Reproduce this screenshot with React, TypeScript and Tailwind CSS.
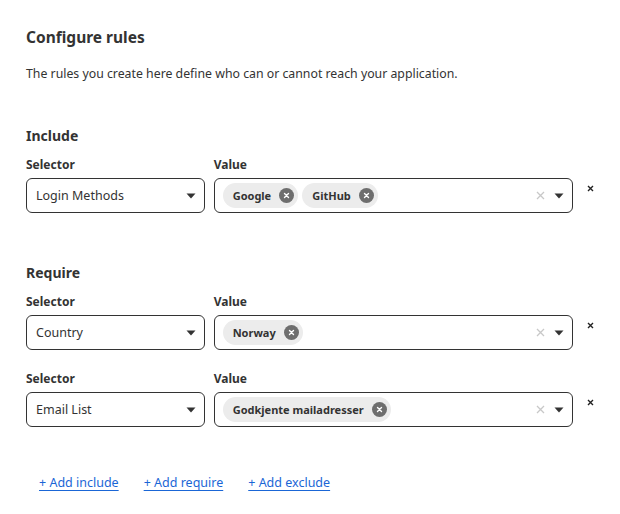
import React from 'react'

const font = { fontFamily: '"Noto Sans", "Open Sans", sans-serif' }

const Caret = () => (
  <svg width="10" height="6" viewBox="0 0 10 6" className="shrink-0">
    <path d="M0.5 0.5 L9.5 0.5 L5 5.5 Z" fill="#333" />
  </svg>
)

const Chip = ({ label }: { label: string }) => (
  <div className="flex items-center gap-[8px] h-[25px] rounded-full bg-[#ececec] pl-[10px] pr-[4px]">
    <span className="text-[11px] font-bold text-[#333]">{label}</span>
    <span className="flex items-center justify-center w-[15px] h-[15px] rounded-full bg-[#6e6e6e]">
      <svg width="7" height="7" viewBox="0 0 7 7">
        <path d="M1.5 1.5 L5.5 5.5 M5.5 1.5 L1.5 5.5" stroke="#fff" strokeWidth="1.4" strokeLinecap="round" />
      </svg>
    </span>
  </div>
)

type Rule = { selector: string; values: string[] }

const RuleRow = ({ rule }: { rule: Rule }) => (
  <div className="flex items-start">
    <div className="flex flex-col w-[179px]">
      <span className="text-[12px] font-bold text-[#333] leading-[18px] mb-[4px]">Selector</span>
      <div className="flex items-center justify-between h-[35px] border border-[#333] rounded-[6px] pl-[9px] pr-[8px]">
        <span className="text-[12.5px] text-[#333]">{rule.selector}</span>
        <Caret />
      </div>
    </div>
    <div className="flex flex-col w-[360px] ml-[9px]">
      <span className="text-[12px] font-bold text-[#333] leading-[18px] mb-[4px]">Value</span>
      <div className="flex items-center justify-between h-[35px] border border-[#333] rounded-[6px] pl-[8px] pr-[8px]">
        <div className="flex items-center gap-[4px]">
          {rule.values.map((v) => (
            <Chip key={v} label={v} />
          ))}
        </div>
        <div className="flex items-center gap-[9px]">
          <svg width="9" height="9" viewBox="0 0 9 9">
            <path d="M1 1 L8 8 M8 1 L1 8" stroke="#c8c8c8" strokeWidth="1.3" />
          </svg>
          <Caret />
        </div>
      </div>
    </div>
    <div className="ml-[14px] mt-[29px]">
      <svg width="7" height="7" viewBox="0 0 7 7">
        <path d="M1 1 L6 6 M6 1 L1 6" stroke="#222" strokeWidth="1.4" />
      </svg>
    </div>
  </div>
)

export default function App() {
  return (
    <div className="w-[620px] h-[514px] bg-white px-[26px] pt-[26px]" style={font}>
      <h1 className="text-[15.5px] font-bold text-[#333] leading-[22px]">Configure rules</h1>
      <p className="text-[12.3px] text-[#333] mt-[17px]">
        The rules you create here define who can or cannot reach your application.
      </p>

      <h2 className="text-[14px] font-bold text-[#333] mt-[43px] leading-[20px]">Include</h2>
      <div className="mt-[10px]">
        <RuleRow rule={{ selector: 'Login Methods', values: ['Google', 'GitHub'] }} />
      </div>

      <h2 className="text-[14px] font-bold text-[#333] mt-[50px] leading-[20px]">Require</h2>
      <div className="mt-[10px] flex flex-col gap-[20px]">
        <RuleRow rule={{ selector: 'Country', values: ['Norway'] }} />
        <RuleRow rule={{ selector: 'Email List', values: ['Godkjente mailadresser'] }} />
      </div>

      <div className="flex gap-[25px] mt-[47px] pl-[13px]">
        <a href="#" className="text-[12.5px] text-[#1a66d6] underline underline-offset-[3px]">+ Add include</a>
        <a href="#" className="text-[12.5px] text-[#1a66d6] underline underline-offset-[3px]">+ Add require</a>
        <a href="#" className="text-[12.5px] text-[#1a66d6] underline underline-offset-[3px]">+ Add exclude</a>
      </div>
    </div>
  )
}
